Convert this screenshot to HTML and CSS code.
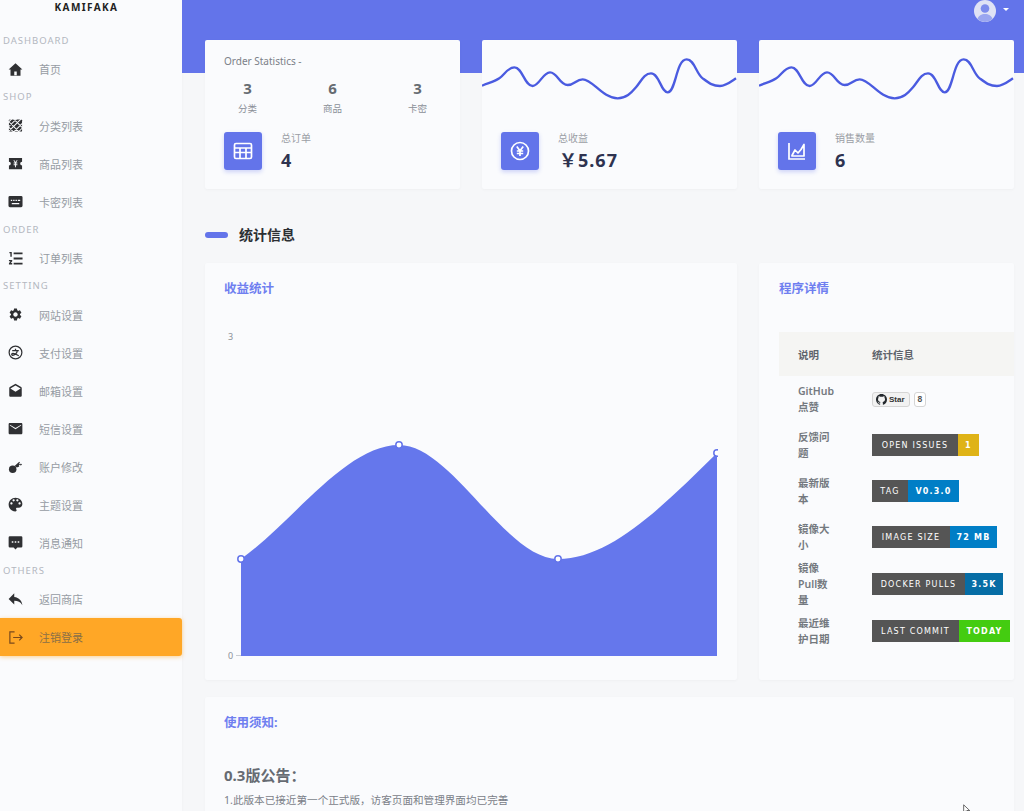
FILE: index.html
```html
<!DOCTYPE html>
<html lang="zh">
<head>
<meta charset="utf-8">
<title>Kamifaka</title>
<link rel="stylesheet" href="styles.css">
</head>
<body>
<div class="app">
  <aside class="sidebar">
    <div class="logo">KAMIFAKA</div>
    <div class="nav-label nav-label-first">DASHBOARD</div>
    <a class="nav-item"><svg class="nav-icon" viewBox="0 0 24 24"><path d="M12 2 1 12h3v10h16V12h3zM10 21v-6h4v6z" fill-rule="evenodd"/></svg><span>首页</span></a>
    <div class="nav-label">SHOP</div>
    <a class="nav-item"><svg class="nav-icon" viewBox="0 0 16 16"><rect x="1" y="1.500" width="14" height="13" rx="1"/><path class="icon-cut" d="M-1 6 6-1M-1 11 11-1M-1 16 16-1M4 17 17 4M9 17 17 9M1 4l11 11M5 0l11 11M0 9l7 7"/></svg><span>分类列表</span></a>
    <a class="nav-item"><svg class="nav-icon" viewBox="0 0 16 16"><path fill-rule="evenodd" d="M1 2h14v4a2 2 0 0 0 0 4v4H1v-4a2 2 0 0 0 0-4zM5.700 4.500 7.400 7H6v1h1.500v.8H6v1h1.500V12h1V9.800H10v-1H8.500V8H10V7H8.600l1.700-2.500H9.200L8 6.400 6.800 4.500z"/></svg><span>商品列表</span></a>
    <a class="nav-item"><svg class="nav-icon" viewBox="0 0 16 16"><path fill-rule="evenodd" d="M2 2h12a1.500 1.500 0 0 1 1.500 1.500v9A1.500 1.500 0 0 1 14 14H2a1.500 1.500 0 0 1-1.500-1.500v-9A1.500 1.500 0 0 1 2 2zM3 6v1.500h1.500V6zM5.500 6v1.500H7V6zM8 6v1.500h1.500V6zM10.500 6v1.500H13V6zM4 9.500V11h8V9.500z"/></svg><span>卡密列表</span></a>
    <div class="nav-label">ORDER</div>
    <a class="nav-item"><svg class="nav-icon" viewBox="0 0 16 16"><path d="M6 1.500h9.500v2H6zM6 7h9.500v2H6zM6 12.500h9.500v2H6zM1.500 1h2.500v5H2.500V2.500h-1zM1 9.500h3.500v1.500L3 12.800h1.500v1.700H1v-1.500L2.600 11H1z"/></svg><span>订单列表</span></a>
    <div class="nav-label">SETTING</div>
    <a class="nav-item"><svg class="nav-icon" viewBox="0 0 24 24"><path d="M19.140 12.940c.04-.3.06-.61.06-.94 0-.32-.02-.64-.07-.94l2.030-1.580a.49.49 0 0 0 .12-.61l-1.920-3.320a.488.488 0 0 0-.59-.22l-2.390.96c-.5-.38-1.030-.7-1.620-.94l-.36-2.540a.484.484 0 0 0-.48-.41h-3.840c-.24 0-.43.17-.47.41l-.36 2.540c-.59.24-1.130.57-1.620.94l-2.390-.96c-.22-.08-.47 0-.59.22L2.740 8.870c-.12.21-.08.47.12.61l2.030 1.580c-.05.3-.09.63-.09.94s.02.64.07.94l-2.030 1.580a.49.49 0 0 0-.12.61l1.920 3.320c.12.22.37.29.59.22l2.390-.96c.5.38 1.030.7 1.620.94l.36 2.540c.05.24.24.41.48.41h3.840c.24 0 .44-.17.47-.41l.36-2.540c.59-.24 1.130-.56 1.620-.94l2.390.96c.22.08.47 0 .59-.22l1.920-3.320c.12-.22.07-.47-.12-.61l-2.010-1.580zM12 15.600c-1.980 0-3.600-1.620-3.600-3.600s1.620-3.600 3.600-3.600 3.600 1.620 3.600 3.600-1.620 3.600-3.600 3.600z"/></svg><span>网站设置</span></a>
    <a class="nav-item"><svg class="nav-icon nav-icon-line" viewBox="0 0 16 16"><circle cx="8" cy="8" r="6.800"/><path d="M4.500 6h7M8 4v2M10 6c-.5 3-3 5-5 5-1.500 0-1.500-2 .5-2 2 0 4 1.500 6 2.500"/></svg><span>支付设置</span></a>
    <a class="nav-item"><svg class="nav-icon" viewBox="0 0 24 24"><path d="M21.990 8c0-.72-.37-1.350-.94-1.700L12 1 2.950 6.300C2.380 6.650 2 7.280 2 8v12c0 1.100.9 2 2 2h16c1.100 0 2-.9 2-2l-.01-12zM12 14L3.740 8.840 12 4l8.260 4.840L12 14z"/></svg><span>邮箱设置</span></a>
    <a class="nav-item"><svg class="nav-icon" viewBox="0 0 24 24"><path d="M21 3H3c-1.100 0-2 .9-2 2v14c0 1.100.9 2 2 2h18c1.100 0 2-.9 2-2V5c0-1.100-.9-2-2-2zm0 4l-9 6-9-6V6l9 5 9-5v1z"/></svg><span>短信设置</span></a>
    <a class="nav-item"><svg class="nav-icon" viewBox="0 0 16 16"><circle cx="5" cy="11" r="4"/><path d="M7 7.500 12 3l.8.8-1 1 1 1 1-1L15 6l-1.500 1-1-1-1 1 .5 1-2.500 1z"/></svg><span>账户修改</span></a>
    <a class="nav-item"><svg class="nav-icon" viewBox="0 0 24 24"><path d="M12 1C5.900 1 1 5.900 1 12s4.900 11 11 11c1 0 1.800-.8 1.800-1.800 0-.5-.2-.9-.5-1.200-.3-.3-.5-.8-.5-1.200 0-1 .8-1.800 1.800-1.800H17c3.300 0 6-2.700 6-6C23 5.400 18.100 1 12 1zM5.500 12c-1 0-1.800-.8-1.800-1.800s.8-1.800 1.800-1.800 1.800.8 1.800 1.800S6.500 12 5.500 12zm3.500-5c-1 0-1.800-.8-1.800-1.800S8 3.400 9 3.400s1.800.8 1.800 1.800S10 7 9 7zm6 0c-1 0-1.800-.8-1.800-1.800s.8-1.800 1.800-1.800 1.800.8 1.800 1.800S16 7 15 7zm3.500 5c-1 0-1.800-.8-1.800-1.800s.8-1.800 1.800-1.800 1.800.8 1.800 1.800-.8 1.800-1.800 1.800z"/></svg><span>主题设置</span></a>
    <a class="nav-item"><svg class="nav-icon" viewBox="0 0 24 24"><path d="M3 2h18a2 2 0 0 1 2 2v14a2 2 0 0 1-2 2h-6l-3 3-3-3H3a2 2 0 0 1-2-2V4a2 2 0 0 1 2-2zm3 8v2.500h2.500V10zm4.750 0v2.500h2.500V10zm4.750 0v2.500H18V10z" fill-rule="evenodd"/></svg><span>消息通知</span></a>
    <div class="nav-label">OTHERS</div>
    <a class="nav-item"><svg class="nav-icon" viewBox="0 0 24 24"><path d="M10 8V2L1 11l9 9v-6c6 0 10 2 13 7-1-7-5-12-13-13z"/></svg><span>返回商店</span></a>
    <a class="nav-item nav-item-active"><svg class="nav-icon nav-icon-exit" viewBox="0 0 16 16"><path d="M7 2H2v12h5M5.500 8H15M12 5l3 3-3 3"/></svg><span>注销登录</span></a>
  </aside>

  <main class="main">
    <div class="topbar">
      <svg class="avatar" viewBox="0 0 22 22"><circle cx="11" cy="11" r="11" fill="#dfe2f5"/><circle cx="11" cy="8.500" r="4.300" fill="#7d8cec"/><path d="M3.500 19c1-3.500 4-5 7.500-5s6.500 1.500 7.500 5a11 11 0 0 1-15 0z" fill="#9aa6f0"/></svg>
      <span class="caret"></span>
    </div>

    <section class="grid">
      <div class="card stat-card">
        <div class="stat-title">Order Statistics -</div>
        <div class="stat-trio">
          <div class="trio-item"><b>3</b><span>分类</span></div>
          <div class="trio-item"><b>6</b><span>商品</span></div>
          <div class="trio-item"><b>3</b><span>卡密</span></div>
        </div>
        <div class="stat-row stat-row-first">
          <div class="stat-icon"><svg viewBox="0 0 20 20"><rect x="1.500" y="2.500" width="17" height="15" rx="1.500"/><path d="M1.500 7h17M1.500 11.500h17M7 7v10.500M13 7v10.500"/></svg></div>
          <div class="stat-text"><span>总订单</span><strong>4</strong></div>
        </div>
      </div>
      <div class="card stat-card">
        <svg class="spark" viewBox="8 150 765 180"><path d="M8 257C30 248 45 245 60 235S85 202 105 202C130 202 135 258 160 258 180 258 190 217 212 217 235 217 240 255 265 255 285 255 290 238 310 238 340 238 370 295 415 295 440 295 455 280 470 262S495 220 515 220C540 220 545 277 565 277 590 277 590 178 622 178 645 178 650 220 670 235S700 258 722 258C740 258 755 245 770 235"/></svg>
        <div class="stat-row">
          <div class="stat-icon"><svg viewBox="0 0 20 20"><circle cx="10" cy="10" r="8.500"/><path d="M6.800 5.500 10 9.800l3.200-4.300M10 9.800V15M6.800 10h6.400M6.800 12.500h6.400"/></svg></div>
          <div class="stat-text"><span>总收益</span><strong class="money">￥5.67</strong></div>
        </div>
      </div>
      <div class="card stat-card">
        <svg class="spark" viewBox="8 150 765 180"><path d="M8 257C30 248 45 245 60 235S85 202 105 202C130 202 135 258 160 258 180 258 190 217 212 217 235 217 240 255 265 255 285 255 290 238 310 238 340 238 370 295 415 295 440 295 455 280 470 262S495 220 515 220C540 220 545 277 565 277 590 277 590 178 622 178 645 178 650 220 670 235S700 258 722 258C740 258 755 245 770 235"/></svg>
        <div class="stat-row">
          <div class="stat-icon"><svg viewBox="0 0 20 20"><path d="M2 2v16h16"/><path d="M5 14.500 8 9l3 3 3-3.500 3-5v11.500H5z" stroke-linejoin="round"/></svg></div>
          <div class="stat-text"><span>销售数量</span><strong>6</strong></div>
        </div>
      </div>
    </section>

    <div class="section-head"><span class="pill"></span><h2>统计信息</h2></div>

    <section class="grid">
      <div class="card chart-card">
        <h3 class="card-title">收益统计</h3>
        <svg class="chart" viewBox="224 320 494 345">
          <text x="228" y="340" class="tick">3</text>
          <text x="228" y="659" class="tick">0</text>
          <path d="M236 655.500H717" class="axis"/>
          <path class="area" d="M241 559C294 521 346 445 399 445 452 445 505 559 558 559 611 559 664 505 717 453V656H241z"/>
          <circle cx="241" cy="559" r="3.200"/><circle cx="399" cy="445" r="3.200"/><circle cx="558" cy="559" r="3.200"/><circle cx="717" cy="453" r="3.200"/>
        </svg>
      </div>
      <div class="card info-card">
        <h3 class="card-title">程序详情</h3>
        <table class="info-table">
          <thead><tr><th>说明</th><th>统计信息</th></tr></thead>
          <tbody>
            <tr><td class="info-name">GitHub 点赞</td><td>
              <span class="gh"><span class="gh-btn"><svg viewBox="0 0 16 16"><path d="M8 0C3.580 0 0 3.580 0 8c0 3.540 2.290 6.530 5.470 7.590.4.07.55-.17.55-.38 0-.19-.01-.82-.01-1.490-2.010.37-2.530-.49-2.690-.94-.09-.23-.48-.94-.82-1.130-.28-.15-.68-.52-.01-.53.63-.01 1.080.58 1.230.82.72 1.210 1.870.87 2.330.66.07-.52.28-.87.51-1.070-1.780-.2-3.640-.89-3.640-3.950 0-.87.31-1.590.82-2.150-.08-.2-.36-1.020.08-2.120 0 0 .67-.21 2.200.82.64-.18 1.320-.27 2-.27s1.360.09 2 .27c1.530-1.040 2.200-.82 2.200-.82.44 1.100.16 1.920.08 2.120.51.56.82 1.270.82 2.150 0 3.070-1.870 3.750-3.650 3.950.29.25.54.73.54 1.480 0 1.070-.01 1.930-.01 2.200 0 .21.15.46.55.38A8.010 8.010 0 0 0 16 8c0-4.420-3.580-8-8-8z"/></svg>Star</span><span class="gh-count">8</span></span>
            </td></tr>
            <tr><td class="info-name">反馈问题</td><td><span class="badge"><span class="badge-k bk-issues">OPEN ISSUES</span><span class="badge-v bv-yellow bv-issues">1</span></span></td></tr>
            <tr><td class="info-name">最新版本</td><td><span class="badge"><span class="badge-k bk-tag">TAG</span><span class="badge-v bv-blue bv-tag">V0.3.0</span></span></td></tr>
            <tr><td class="info-name">镜像大小</td><td><span class="badge"><span class="badge-k bk-size">IMAGE SIZE</span><span class="badge-v bv-blue bv-size">72 MB</span></span></td></tr>
            <tr><td class="info-name">镜像Pull数量</td><td><span class="badge"><span class="badge-k bk-pulls">DOCKER PULLS</span><span class="badge-v bv-navy bv-pulls">3.5K</span></span></td></tr>
            <tr><td class="info-name">最近维护日期</td><td><span class="badge"><span class="badge-k bk-commit">LAST COMMIT</span><span class="badge-v bv-green bv-commit">TODAY</span></span></td></tr>
          </tbody>
        </table>
      </div>
    </section>

    <section class="card notice">
      <h3 class="card-title">使用须知:</h3>
      <h4 class="notice-head">0.3版公告：</h4>
      <p class="notice-text">1.此版本已接近第一个正式版，访客页面和管理界面均已完善</p>
    </section>
  </main>
</div>
<svg class="cursor" viewBox="0 0 12 16"><path d="M1 1v12l3-3 2 4.500 1.800-.8-2-4.200H10z"/></svg>
</body>
</html>
```
FILE: styles.css
```css
* { box-sizing: border-box; }
html, body { margin: 0; height: 811px; overflow: hidden; }
body {
  font-family: "Noto Sans", "Noto Sans CJK SC", sans-serif;
  background: #f6f7f9;
  color: #6c757d;
  font-size: 11px;
}
.app { display: flex; height: 811px; overflow: hidden; }

.sidebar { width: 182px; flex: none; background: #fafbfd; box-shadow: 1px 0 2px rgba(0,0,0,.02); }
.logo { height: 31px; padding-right: 9px; text-align: center; font-size: 10px; font-weight: 700; letter-spacing: 1.400px; color: #222; line-height: 15px; }
.nav-label { height: 18.500px; padding-left: 3px; font-size: 9.500px; letter-spacing: 1px; line-height: 18.500px; color: #b3b7bf; }
.nav-label-first { height: 19px; line-height: 19px; }
.nav-item { display: flex; align-items: center; height: 38px; padding-left: 8px; gap: 16px; color: #969ba3; font-size: 11px; }
.nav-icon { width: 15px; height: 15px; flex: none; fill: #2f3033; }
.nav-icon-line { fill: none; stroke: #2f3033; stroke-width: 1.300; }
.nav-icon-exit { fill: none; stroke: #7a4a1c; stroke-width: 1.300; }
.icon-cut { fill: none; stroke: #fafbfd; stroke-width: 1.100; }
.nav-item-active { background: #ffa726; border-radius: 0 3px 3px 0; color: #8a6f48; box-shadow: 0 1px 4px rgba(255,167,38,.5); }

.main {
  flex: 1;
  min-width: 0;
  height: 811px;
  overflow: hidden;
  padding: 0 10px 0 23px;
  background: linear-gradient(#6374ea 73px, transparent 73px);
}
.topbar { height: 40px; display: flex; justify-content: flex-end; padding: 0 5px 18px 0; align-items: flex-start; gap: 7px; }
.avatar { width: 22px; height: 22px; flex: none; }
.caret { margin-top: 8px; border: 3px solid transparent; border-top-color: #fff; border-bottom: 0; }

.grid { display: grid; grid-template-columns: repeat(3, 255px); gap: 22px; }
.card { background: #fafbfd; border-radius: 2px; box-shadow: 0 1px 3px rgba(0,0,0,.03); }
.card-title { margin: 0; font-size: 12.500px; line-height: 18px; font-weight: 700; color: #6f7ff0; }

.stat-card { height: 149px; padding: 0 19px; }
.stat-title { padding-top: 14px; font-size: 10px; line-height: 14px; color: #7b8088; }
.stat-trio { display: grid; grid-template-columns: repeat(3, 1fr); margin: 8px -19px 0; text-align: center; }
.trio-item b { display: block; font-size: 15px; line-height: 24px; color: #666b72; }
.trio-item span { display: block; font-size: 9.500px; line-height: 18px; color: #8b9098; }
.stat-row { display: flex; gap: 19px; margin-top: 22px; }
.stat-row-first { margin-top: 14px; }
.stat-icon { width: 38px; height: 38px; background: #6374ea; border-radius: 3px; display: flex; align-items: center; justify-content: center; box-shadow: 0 2px 4px rgba(99,116,234,.3); }
.stat-icon svg { width: 20px; height: 20px; fill: none; stroke: #fff; stroke-width: 1.700; }
.stat-text { display: flex; flex-direction: column; }
.stat-text span { font-size: 10px; line-height: 12px; color: #9a9ea5; }
.stat-text strong { margin-top: 2px; font-size: 18px; line-height: 28px; color: #2e3350; }
.stat-text .money { letter-spacing: 1px; margin-left: 1px; }
.spark { display: block; width: 255px; height: 60px; margin: 10px -19px 0; fill: none; stroke: #4a5be0; stroke-width: 7; }

.section-head { display: flex; align-items: center; gap: 11px; height: 74px; padding-top: 18px; }
.pill { width: 23px; height: 6px; border-radius: 3px; background: #6374ea; }
.section-head h2 { margin: -2px 0 0; font-size: 14px; font-weight: 700; color: #2c2f33; }

.chart-card { grid-column: span 2; height: 417px; padding: 17px 19px 0; }
.chart { display: block; width: 494px; height: 345px; margin-top: 22px; overflow: hidden; }
.tick { font-size: 9px; fill: #8b9098; }
.axis { stroke: #c8ccd2; stroke-width: 1; fill: none; }
.area { fill: #6577ec; }
.chart circle { fill: #fff; stroke: #6374ea; stroke-width: 1.500; }

.info-card { height: 417px; padding: 17px 0 0 20px; overflow: hidden; }
.info-table { margin-top: 34px; border-collapse: collapse; width: 235px; table-layout: fixed; }
.info-table th { height: 44px; padding: 0; text-align: left; font-size: 10.500px; color: #5f646b; background: #f5f5f3; font-weight: 700; }
.info-table th:first-child { width: 93px; padding-left: 19px; }
.info-table td { height: 46px; padding: 0; vertical-align: middle; }
.info-table .info-name { padding: 0 38px 0 19px; font-size: 10.500px; line-height: 16px; font-weight: 600; color: #74797f; }

.gh { display: flex; align-items: center; gap: 4px; }
.gh-btn { display: flex; align-items: center; gap: 2px; height: 15px; padding: 0 4px 0 3px; border: 1px solid #d5d5d5; border-radius: 3px; background: #f2f2f2; font: 700 8px "Liberation Sans", sans-serif; color: #333; }
.gh-btn svg { width: 11px; height: 11px; fill: #24292e; }
.gh-count { height: 15px; padding: 0 3px; border: 1px solid #d5d5d5; border-radius: 3px; background: #fff; font: 700 8.500px/13px "Liberation Sans", sans-serif; color: #555; }

.badge { display: flex; height: 22px; font: 700 8px/23px "DejaVu Sans", sans-serif; letter-spacing: 1.200px; color: #fff; text-align: center; white-space: nowrap; }
.badge-k { background: #555; font-weight: 400; }
.bv-yellow { background: #dfb317; }
.bv-blue { background: #007ec6; }
.bv-navy { background: #066da5; }
.bv-green { background: #44cc11; }
.badge-k, .badge-v { flex: none; }
.bk-issues { width: 86px; } .bv-issues { width: 21px; }
.bk-tag { width: 36px; } .bv-tag { width: 51px; }
.bk-size { width: 78px; } .bv-size { width: 47px; }
.bk-pulls { width: 93px; } .bv-pulls { width: 38px; }
.bk-commit { width: 87px; } .bv-commit { width: 51px; }

.notice { margin-top: 17px; height: 200px; padding: 17px 19px; }
.notice-head { margin: 32px 0 0; font-size: 15px; line-height: 22px; font-weight: 700; color: #666b72; }
.notice-text { margin: 6px 0 0; font-size: 10.600px; line-height: 16px; color: #7b8088; }

.cursor { position: absolute; left: 963px; top: 804px; width: 8px; height: 11px; fill: #fff; stroke: #222; stroke-width: 1; }
```
